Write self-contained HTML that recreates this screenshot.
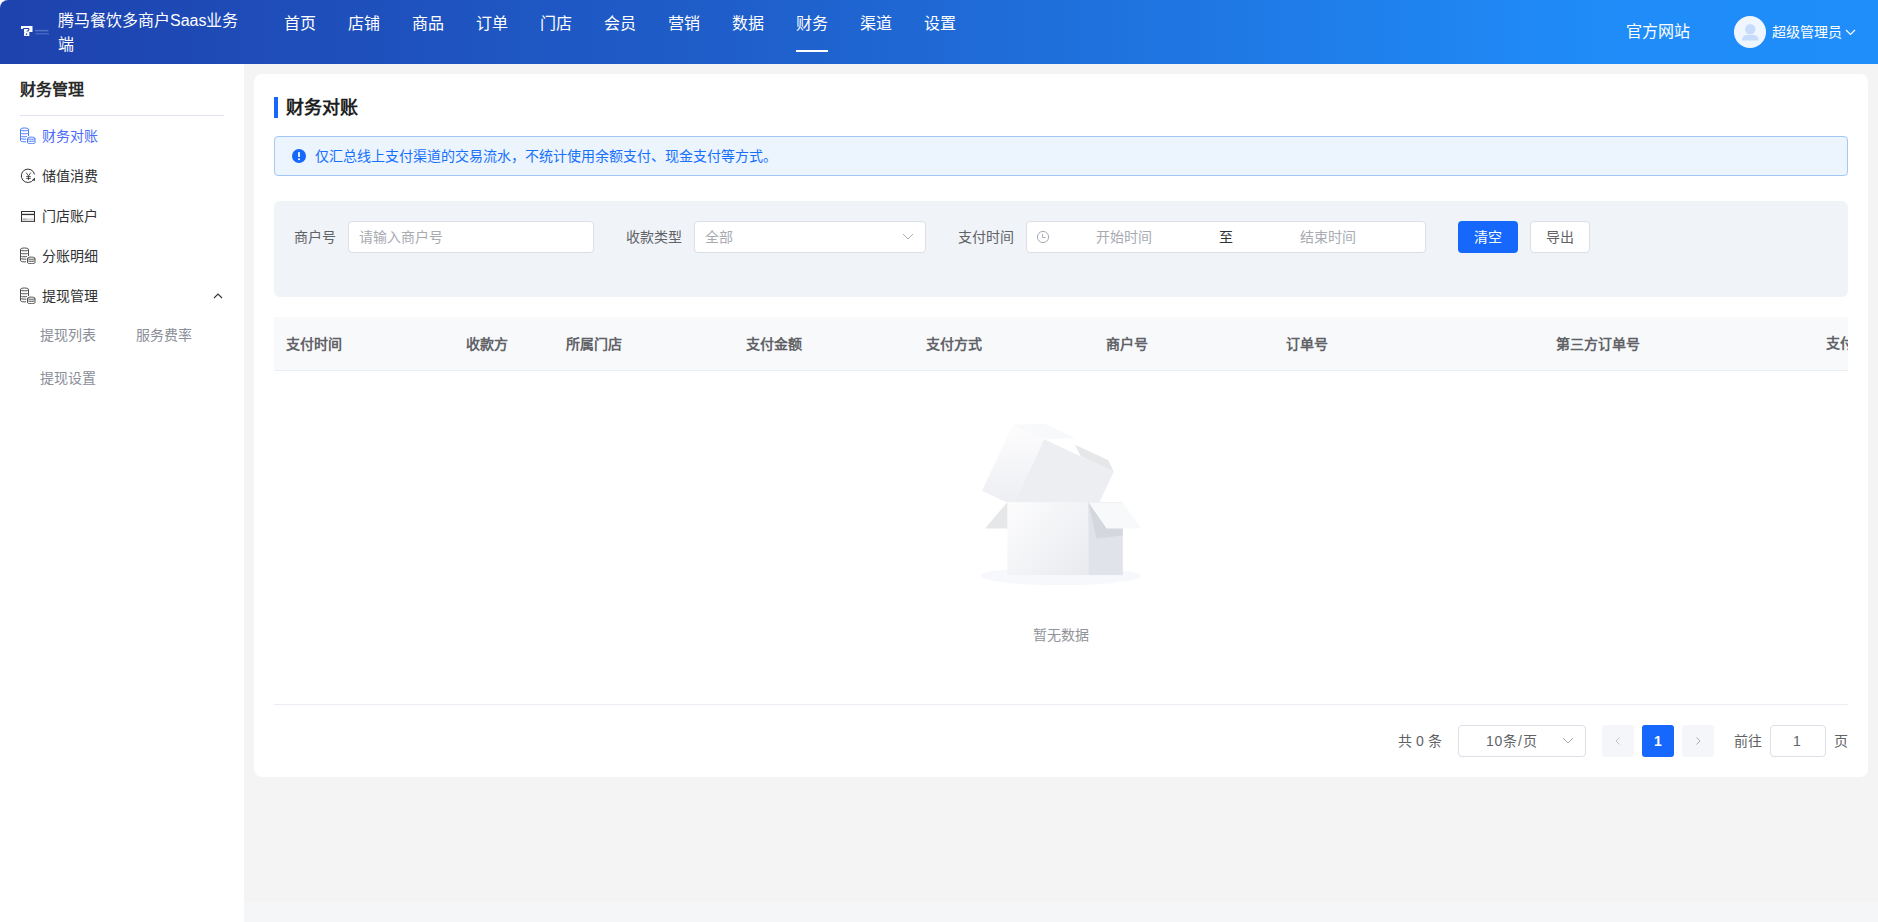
<!DOCTYPE html>
<html lang="zh-CN"><head><meta charset="utf-8">
<style>
*{box-sizing:border-box;margin:0;padding:0}
html,body{width:1878px;height:922px;overflow:hidden;background:#f4f4f4;font-family:"Liberation Sans",sans-serif;color:#303133}
.abs{position:absolute;white-space:nowrap}
#hdr{position:absolute;left:0;top:0;width:1878px;height:64px;border-top-left-radius:8px;background:linear-gradient(90deg,#1e42ae 0%,#1f5fcb 40%,#1f8cf8 85%,#1f8dfa 100%)}
#side{position:absolute;left:0;top:64px;width:244px;height:858px;background:#fff}
#card{position:absolute;left:254px;top:74px;width:1614px;height:703px;background:#fff;border-radius:8px}
.nav{position:absolute;top:13px;font-size:16px;color:#fff;line-height:22px}
.mi{position:absolute;left:42px;font-size:14px;line-height:20px;color:#303133}
.sub{position:absolute;font-size:14px;line-height:20px;color:#8a8e99}
.lbl{position:absolute;font-size:14px;color:#606266;line-height:20px}
.inp{position:absolute;height:32px;background:#fff;border:1px solid #dcdfe6;border-radius:4px}
.ph{position:absolute;font-size:14px;color:#a8abb2;line-height:20px}
.th{position:absolute;white-space:nowrap;top:335px;font-size:14px;font-weight:bold;color:#606266;line-height:18px}
</style></head>
<body>
<div style="position:absolute;left:0;top:0;width:20px;height:20px;background:#fff"></div>
<div id="hdr">
  <div class="abs" style="left:58px;top:9px;width:190px;white-space:normal;font-size:16px;line-height:23.5px;color:#fff">腾马餐饮多商户Saas业务端</div>
  <div class="nav" style="left:284px">首页</div>
  <div class="nav" style="left:348px">店铺</div>
  <div class="nav" style="left:412px">商品</div>
  <div class="nav" style="left:476px">订单</div>
  <div class="nav" style="left:540px">门店</div>
  <div class="nav" style="left:604px">会员</div>
  <div class="nav" style="left:668px">营销</div>
  <div class="nav" style="left:732px">数据</div>
  <div class="nav" style="left:796px">财务</div>
  <div class="nav" style="left:860px">渠道</div>
  <div class="nav" style="left:924px">设置</div>
  <div style="position:absolute;left:796px;top:50px;width:32px;height:2px;background:#fff"></div>
  <div class="nav" style="left:1626px;top:21px">官方网站</div>
    <div class="abs" style="left:1772px;top:22px;font-size:14px;line-height:20px;color:#fff">超级管理员</div>
</div>

<div style="position:absolute;left:244px;top:902px;width:1634px;height:20px;background:#f5f6f8"></div>

<!-- header icons -->
<svg style="position:absolute;left:20px;top:25px" width="32" height="13" viewBox="0 0 32 13">
  <path d="M1 1h11.5v6H9.5L9 8H4.5L4 7V4h4.5L7.5 5.5 6 6.5h2.5L9.5 4 9 3H3.5L2.5 4H1z" fill="#fff"/>
  <path d="M4 8h5.3v3H4.5L4 10.5z" fill="#fff"/>
  <path d="M6 8.6l1.5-.3-.5 1.5-1.3.4z" fill="#1f45b0"/>
  <rect x="15" y="4.8" width="13.5" height="1.6" fill="#9db0e6" opacity=".4"/>
  <rect x="15.5" y="8" width="13.5" height="1.5" fill="#9db0e6" opacity=".3"/>
</svg>
<svg style="position:absolute;left:1734px;top:16px" width="32" height="32" viewBox="0 0 32 32">
  <circle cx="16" cy="16" r="16" fill="#f0f6ff"/>
  <circle cx="16" cy="19" r="0" fill="#c6dcfa"/>
  <circle cx="16.2" cy="13.2" r="5.2" fill="#c6dcfa"/>
  <path d="M8 24c0-3 2.5-5 5-5h6.5c2.5 0 5 2 5 5v0.5H8z" fill="#c6dcfa"/>
</svg>
<svg style="position:absolute;left:1845px;top:29px" width="11" height="7" viewBox="0 0 11 7">
  <path d="M1 1l4.5 4.5L10 1" stroke="#fff" stroke-width="1.2" fill="none"/>
</svg>
<div id="side">
  <div class="abs" style="left:20px;top:14px;font-size:16px;font-weight:bold;line-height:24px;color:#2a2a2a">财务管理</div>
  <div style="position:absolute;left:20px;top:51px;width:204px;height:1px;background:#e1e4ef"></div>
  
  <svg style="position:absolute;left:19px;top:63px" width="18" height="17" viewBox="0 0 18 17">
    <g fill="none" stroke="#3f74fa" stroke-width=".95">
      <path d="M1.5 2.5c0-1 1.7-1.5 4-1.5s4 .5 4 1.5v6.5"/>
      <path d="M1.5 2.5v11c0 .8 1.5 1.3 4 1.3h1.5"/>
      <path d="M1.5 2.5c0 .8 1.7 1.3 4 1.3s4-.5 4-1.3"/>
      <path d="M2.3 6.4c1 .5 5.4.5 6.4 0"/>
      <path d="M2.3 9.4c1 .5 4.4.5 5.6 0"/>
      <path d="M1.8 11.5c.8.6 3.5.8 5.5.6"/>
      <path d="M8.5 11.3c0-.8 1.8-1.2 3.7-1.2s3.8.4 3.8 1.2v4.2c0 .8-1.8 1.2-3.8 1.2s-3.7-.4-3.7-1.2z"/>
      <path d="M8.8 11.8c.8.6 6.6.6 7.2 0"/>
      <path d="M9.3 14c1 .4 5 .4 6 0"/>
    </g>
  </svg>
  <svg style="position:absolute;left:20px;top:104px" width="16" height="16" viewBox="0 0 16 16">
    <path d="M14.55 6.4A6.7 6.7 0 1 0 13.49 11.64" fill="none" stroke="#333" stroke-width="1"/>
    <path d="M14.9 9.6l.2 3.2-3-.6z" fill="#333"/>
    <path d="M6.1 4.6L8.5 7.9l2.4-3.3M6.2 8.6h4.6M6.2 10.4h4.6M8.5 7.9v4.2" fill="none" stroke="#333" stroke-width=".85"/>
  </svg>
  <svg style="position:absolute;left:20px;top:146px" width="16" height="13" viewBox="0 0 16 13">
    <rect x="1.5" y="1.5" width="13" height="10" fill="none" stroke="#333" stroke-width="1"/>
    <rect x="1.5" y="3.8" width="13" height="1.3" fill="#333"/>
    <rect x="2" y="8.2" width="12" height="3" fill="#d9d9d9"/>
    <rect x="3" y="8.8" width="3.5" height=".8" fill="#999"/>
  </svg>
  <svg style="position:absolute;left:19px;top:183px" width="18" height="17" viewBox="0 0 18 17">
    <g fill="none" stroke="#444" stroke-width=".95">
      <path d="M1.5 2.5c0-1 1.7-1.5 4-1.5s4 .5 4 1.5v6.5"/>
      <path d="M1.5 2.5v11c0 .8 1.5 1.3 4 1.3h1.5"/>
      <path d="M1.5 2.5c0 .8 1.7 1.3 4 1.3s4-.5 4-1.3"/>
      <path d="M2.3 6.4c1 .5 5.4.5 6.4 0"/>
      <path d="M2.3 9.4c1 .5 4.4.5 5.6 0"/>
      <path d="M1.8 11.5c.8.6 3.5.8 5.5.6"/>
      <path d="M8.5 11.3c0-.8 1.8-1.2 3.7-1.2s3.8.4 3.8 1.2v4.2c0 .8-1.8 1.2-3.8 1.2s-3.7-.4-3.7-1.2z"/>
      <path d="M8.8 11.8c.8.6 6.6.6 7.2 0"/>
      <path d="M9.3 14c1 .4 5 .4 6 0"/>
    </g>
  </svg>
  <svg style="position:absolute;left:19px;top:223px" width="18" height="17" viewBox="0 0 18 17">
    <g fill="none" stroke="#444" stroke-width=".95">
      <path d="M1.5 2.5c0-1 1.7-1.5 4-1.5s4 .5 4 1.5v6.5"/>
      <path d="M1.5 2.5v11c0 .8 1.5 1.3 4 1.3h1.5"/>
      <path d="M1.5 2.5c0 .8 1.7 1.3 4 1.3s4-.5 4-1.3"/>
      <path d="M2.3 6.4c1 .5 5.4.5 6.4 0"/>
      <path d="M2.3 9.4c1 .5 4.4.5 5.6 0"/>
      <path d="M1.8 11.5c.8.6 3.5.8 5.5.6"/>
      <path d="M8.5 11.3c0-.8 1.8-1.2 3.7-1.2s3.8.4 3.8 1.2v4.2c0 .8-1.8 1.2-3.8 1.2s-3.7-.4-3.7-1.2z"/>
      <path d="M8.8 11.8c.8.6 6.6.6 7.2 0"/>
      <path d="M9.3 14c1 .4 5 .4 6 0"/>
    </g>
  </svg>
  <svg style="position:absolute;left:212px;top:228px" width="12" height="8" viewBox="0 0 12 8">
    <path d="M2 6l4-4 4 4" fill="none" stroke="#333" stroke-width="1.1"/>
  </svg>
  <div class="mi" style="top:62px;color:#4a6cf7">财务对账</div>
  <div class="mi" style="top:102px">储值消费</div>
  <div class="mi" style="top:142px">门店账户</div>
  <div class="mi" style="top:182px">分账明细</div>
  <div class="mi" style="top:222px">提现管理</div>
  <div class="sub" style="left:40px;top:261px">提现列表</div>
  <div class="sub" style="left:136px;top:261px">服务费率</div>
  <div class="sub" style="left:40px;top:304px">提现设置</div>
</div>

<div id="card"></div>
<div style="position:absolute;left:274px;top:97px;width:4px;height:21px;background:#1668fc"></div>
<div class="abs" style="left:286px;top:95px;font-size:18px;font-weight:bold;line-height:26px;color:#1f1f1f">财务对账</div>
<div style="position:absolute;left:274px;top:136px;width:1574px;height:40px;background:#ecf4fd;border:1px solid #a3c8f8;border-radius:4px"></div>

<div class="abs" style="left:315px;top:146px;font-size:14px;line-height:20px;color:#1670fc">仅汇总线上支付渠道的交易流水，不统计使用余额支付、现金支付等方式。</div>

<div style="position:absolute;left:274px;top:201px;width:1574px;height:96px;background:#f0f3f7;border-radius:6px"></div>
<div class="lbl" style="left:294px;top:227px">商户号</div>
<div class="inp" style="left:348px;top:221px;width:246px"></div>
<div class="ph" style="left:359px;top:227px">请输入商户号</div>
<div class="lbl" style="left:626px;top:227px">收款类型</div>
<div class="inp" style="left:694px;top:221px;width:232px"></div>
<div class="ph" style="left:705px;top:227px">全部</div>
<div class="lbl" style="left:958px;top:227px">支付时间</div>
<div class="inp" style="left:1026px;top:221px;width:400px"></div>
<div class="ph" style="left:1096px;top:227px">开始时间</div>
<div class="abs" style="left:1219px;top:227px;font-size:14px;line-height:20px;color:#303133">至</div>
<div class="ph" style="left:1300px;top:227px">结束时间</div>
<div style="position:absolute;left:1458px;top:221px;width:60px;height:32px;background:#1668fc;border-radius:4px"></div>
<div class="abs" style="left:1474px;top:227px;font-size:14px;line-height:20px;color:#fff">清空</div>
<div class="inp" style="left:1530px;top:221px;width:60px"></div>
<div class="abs" style="left:1546px;top:227px;font-size:14px;line-height:20px;color:#606266">导出</div>

<div style="position:absolute;left:274px;top:317px;width:1574px;height:54px;background:#f8f9fb;border-bottom:1px solid #ebeef5"></div>
<div class="th" style="left:286px">支付时间</div>
<div class="th" style="left:466px">收款方</div>
<div class="th" style="left:566px">所属门店</div>
<div class="th" style="left:746px">支付金额</div>
<div class="th" style="left:926px">支付方式</div>
<div class="th" style="left:1106px">商户号</div>
<div class="th" style="left:1286px">订单号</div>
<div class="th" style="left:1556px">第三方订单号</div>
<div style="position:absolute;left:1826px;top:330px;width:22px;height:26px;overflow:hidden"><div class="th" style="left:0;top:4px">支付</div></div>

<div class="abs" style="left:1033px;top:625px;font-size:14px;line-height:20px;color:#909399">暂无数据</div>
<div style="position:absolute;left:274px;top:704px;width:1574px;height:1px;background:#ebeef5"></div>

<div class="abs" style="left:1398px;top:731px;font-size:14px;line-height:20px;color:#606266">共 0 条</div>
<div class="inp" style="left:1458px;top:725px;width:128px"></div>
<div class="abs" style="left:1486px;top:731px;font-size:14px;line-height:20px;color:#606266;letter-spacing:.8px">10条/页</div>
<div style="position:absolute;left:1602px;top:725px;width:32px;height:32px;background:#f5f6f9;border-radius:3px"></div>
<div style="position:absolute;left:1642px;top:725px;width:32px;height:32px;background:#1668fc;border-radius:3px"></div>
<div class="abs" style="left:1654px;top:731px;font-size:14px;font-weight:bold;line-height:20px;color:#fff">1</div>
<div style="position:absolute;left:1682px;top:725px;width:32px;height:32px;background:#f5f6f9;border-radius:3px"></div>
<div class="abs" style="left:1734px;top:731px;font-size:14px;line-height:20px;color:#606266">前往</div>
<div class="inp" style="left:1770px;top:725px;width:56px"></div>
<div class="abs" style="left:1793px;top:731px;font-size:14px;line-height:20px;color:#606266">1</div>
<div class="abs" style="left:1834px;top:731px;font-size:14px;line-height:20px;color:#606266">页</div>


<svg style="position:absolute;left:980.5px;top:411px" width="160" height="174.2" viewBox="0 0 79 86">
  <defs>
    <linearGradient id="g1" x1="38.85%" y1="0%" x2="61.15%" y2="100%"><stop stop-color="#fcfcfd" offset="0%"/><stop stop-color="#eeeff3" offset="100%"/></linearGradient>
    <linearGradient id="g2" x1="0%" y1="9.5%" x2="100%" y2="90.5%"><stop stop-color="#fcfcfd" offset="0%"/><stop stop-color="#e9ebef" offset="100%"/></linearGradient>
    <mask id="m4" fill="#fff"><rect x="0" y="0" width="17" height="36"/></mask>
  </defs>
  <g stroke="none" fill="none" fill-rule="evenodd">
    <path d="M39.5,86 C61.3152476,86 79,83.9106622 79,81.3333333 C79,78.7560045 57.3152476,78 35.5,78 C13.6847524,78 0,78.7560045 0,81.3333333 C0,83.9106622 17.6847524,86 39.5,86 Z" fill="#f7f8fc"/>
    <polygon fill="#e5e7e9" transform="translate(27.5,51.5) scale(1,-1) translate(-27.5,-51.5)" points="13 58 53 58 42 45 2 45"/>
    <g transform="translate(34.5,31.5) scale(-1,1) rotate(-25) translate(-34.5,-31.5) translate(7,10)">
      <polygon fill="#e5e7e9" transform="translate(11.5,5) scale(1,-1) translate(-11.5,-5)" points="0 3 18 3 23 7 5 7"/>
      <polygon fill="#edeef2" points="0 7 38 7 38 43 0 43"/>
      <rect fill="url(#g1)" transform="translate(46.5,25) scale(-1,1) translate(-46.5,-25)" x="38" y="7" width="17" height="36"/>
      <polygon fill="#f8f9fb" transform="translate(39.5,3.5) scale(-1,1) translate(-39.5,-3.5)" points="24 7 41 7 55 0 38 0"/>
    </g>
    <rect fill="url(#g2)" x="13" y="45" width="40" height="36"/>
    <g transform="translate(53,45)">
      <rect fill="#e0e3e9" transform="translate(8.5,18) scale(-1,1) translate(-8.5,-18)" x="0" y="0" width="17" height="36"/>
      <polygon fill="#d5d7de" transform="translate(12,9) scale(-1,1) translate(-12,-9)" points="7 0 24 0 20 18 7 16.5"/>
    </g>
    <polygon fill="#f8f9fb" transform="translate(66,51.5) scale(-1,1) translate(-66,-51.5)" points="62 45 79 45 70 58 53 58"/>
  </g>
</svg>
<svg style="position:absolute;left:292px;top:149px" width="14" height="14" viewBox="0 0 14 14">
  <circle cx="7" cy="7" r="7" fill="#1668fc"/>
  <rect x="6.1" y="3" width="1.8" height="5" rx=".6" fill="#fff"/>
  <circle cx="7" cy="10.2" r="1" fill="#fff"/>
</svg>
<svg style="position:absolute;left:1036px;top:230px" width="14" height="14" viewBox="0 0 14 14">
  <circle cx="7" cy="7" r="5.6" fill="none" stroke="#a8abb2" stroke-width="1"/>
  <path d="M6.6 4v3.5h3" fill="none" stroke="#a8abb2" stroke-width="1"/>
</svg>
<svg style="position:absolute;left:901px;top:232px" width="14" height="9" viewBox="0 0 14 9">
  <path d="M2 2l5 5 5-5" fill="none" stroke="#a8abb2" stroke-width="1"/>
</svg>
<svg style="position:absolute;left:1561px;top:736px" width="14" height="9" viewBox="0 0 14 9">
  <path d="M2 2l5 5 5-5" fill="none" stroke="#a8abb2" stroke-width="1"/>
</svg>
<svg style="position:absolute;left:1612px;top:735px" width="12" height="12" viewBox="0 0 12 12">
  <path d="M7.5 2.5L4 6l3.5 3.5" fill="none" stroke="#c0c4cc" stroke-width="1"/>
</svg>
<svg style="position:absolute;left:1692px;top:735px" width="12" height="12" viewBox="0 0 12 12">
  <path d="M4.5 2.5L8 6l-3.5 3.5" fill="none" stroke="#a8abb2" stroke-width="1"/>
</svg>
</body></html>
